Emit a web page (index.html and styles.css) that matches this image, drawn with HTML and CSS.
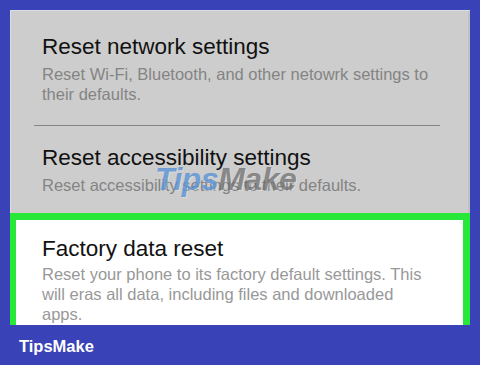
FILE: index.html
```html
<!DOCTYPE html>
<html lang="en">
<head>
<meta charset="utf-8">
<title>Reset options</title>
<link rel="stylesheet" href="styles.css">
</head>
<body>
<div class="frame">
  <div class="screen">
    <div class="item item-first">
      <div class="title">Reset network settings</div>
      <div class="desc">Reset Wi-Fi, Bluetooth, and other netowrk settings to their defaults.</div>
    </div>
    <div class="divider"></div>
    <div class="item item-second">
      <div class="title">Reset accessibility settings</div>
      <div class="desc">Reset accessibility settings to their defaults.</div>
    </div>
    <div class="item item-active">
      <div class="title">Factory data reset</div>
      <div class="desc">Reset your phone to its factory default settings. This will eras all data, including files and downloaded apps.</div>
    </div>
    <div class="watermark"><span class="wm-tips">Tips</span><span class="wm-make">Make</span></div>
  </div>
  <div class="brand">TipsMake</div>
</div>
</body>
</html>
```

FILE: styles.css
```css
html, body {
  margin: 0;
  padding: 0;
}

body {
  width: 480px;
  height: 365px;
  overflow: hidden;
  background: #3a42b8;
  font-family: "Liberation Sans", Arial, sans-serif;
}

.frame {
  padding: 10px 10px 0 10px;
}

.screen {
  position: relative;
  height: 315px;
  overflow: hidden;
  background: #cdcdcd;
  box-shadow: inset 1px 1px 0 #dcdce8, inset -2px 0 0 #c2c2c2;
}

.item {
  padding: 0 35px 0 32px;
}

.title {
  font-size: 22.5px;
  line-height: 26px;
  color: #111111;
}

.desc {
  margin-top: 4px;
  font-size: 16.5px;
  line-height: 20px;
  color: #848484;
}

.item-first {
  padding-top: 24px;
}

.divider {
  margin: 21px 0 0 24px;
  width: 406px;
  height: 1px;
  background: #858585;
}

.item-second {
  padding-top: 19px;
}

.item-active {
  margin-top: 18px;
  padding: 16px 28px 0 26px;
  background: #ffffff;
  border-top: 7px solid #27e838;
  border-left: 6px solid #27e838;
  border-right: 7px solid #27e838;
  height: 120px;
}

.item-active .desc {
  margin-top: 2px;
  color: #989898;
}

.watermark {
  position: absolute;
  left: 145px;
  top: 153px;
  font-size: 32px;
  line-height: 32px;
  font-weight: bold;
  font-style: italic;
  letter-spacing: -0.5px;
  text-shadow: 1px 1px 0 rgba(255, 255, 255, 0.3);
}

.wm-tips {
  color: rgba(80, 140, 210, 0.75);
}

.wm-make {
  color: rgba(100, 100, 100, 0.7);
}

.brand {
  margin-top: 11px;
  padding-left: 9px;
  font-size: 16.5px;
  line-height: 20px;
  font-weight: bold;
  color: #ffffff;
}
```
